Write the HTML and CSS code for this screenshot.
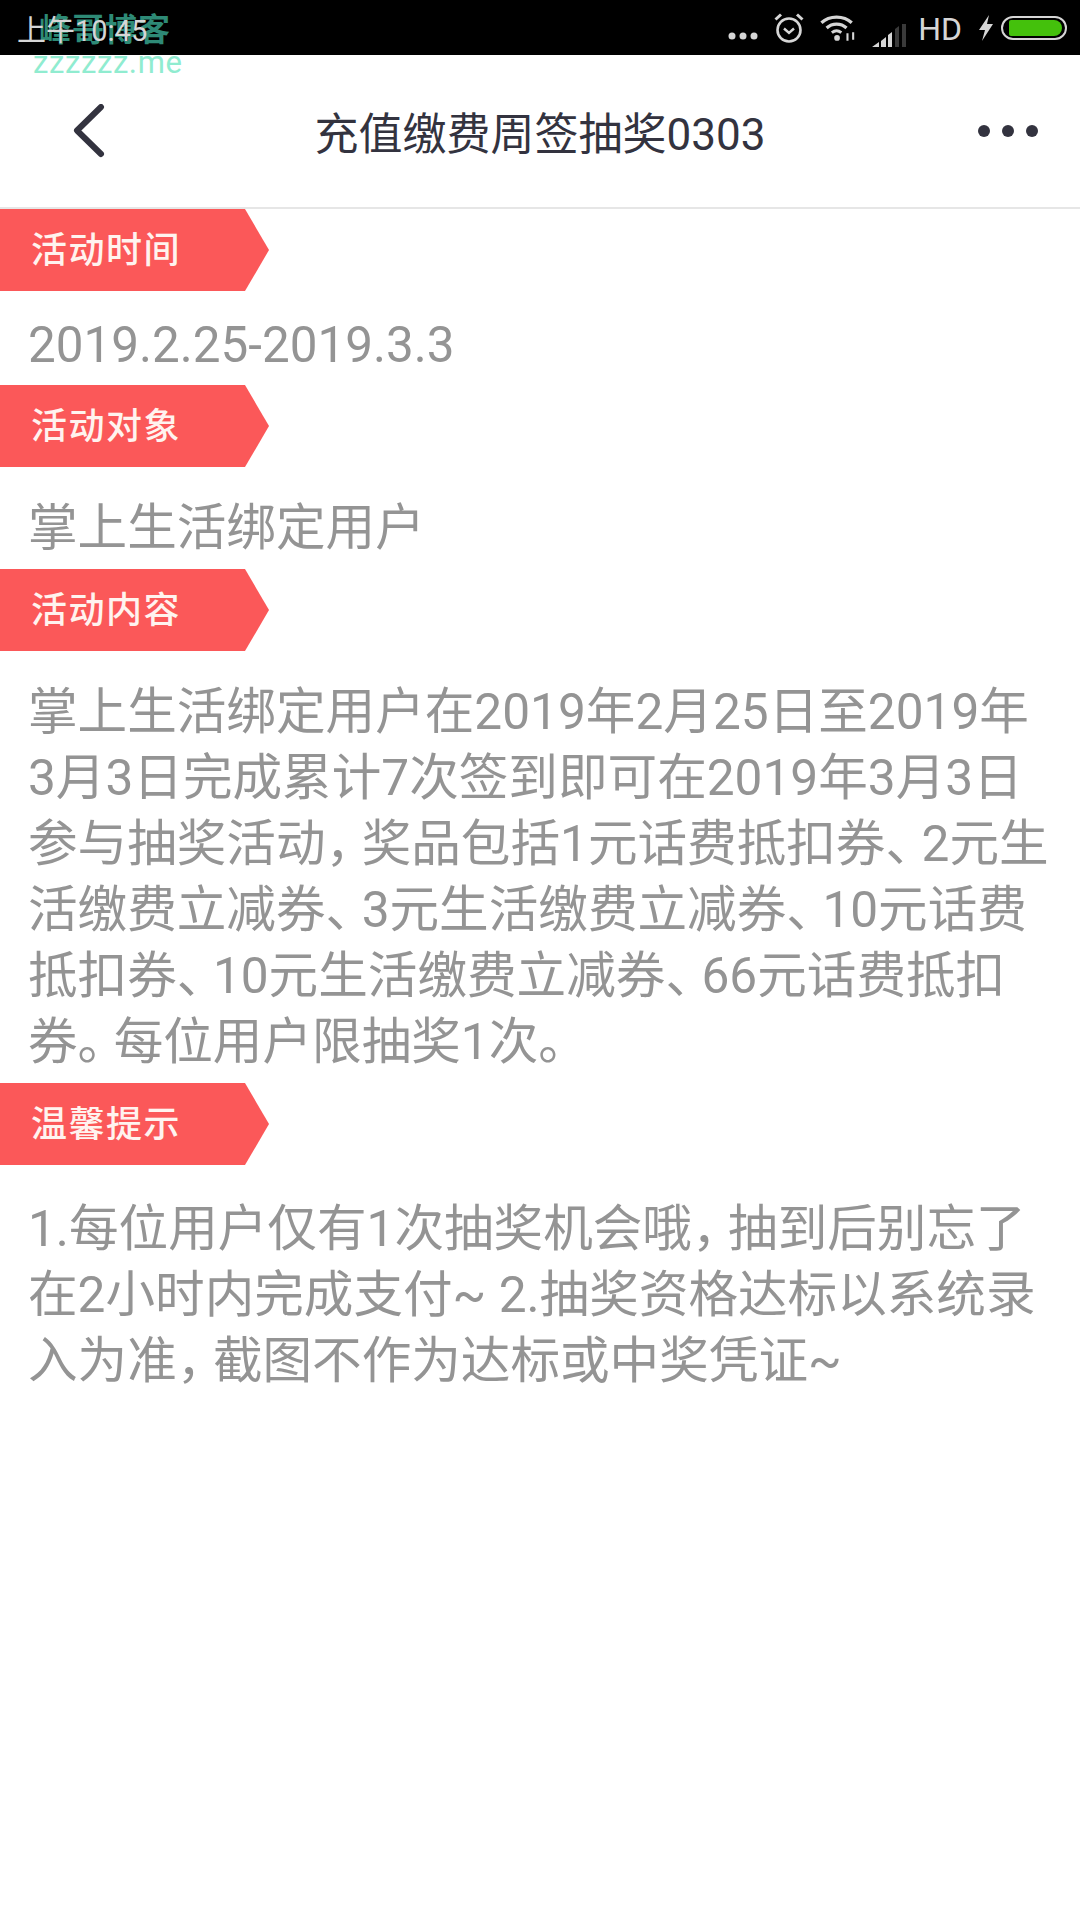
FILE: index.html
```html
<!DOCTYPE html>
<html lang="zh-CN">
<head>
    <meta charset="UTF-8">
    <meta name="viewport" content="width=device-width, initial-scale=1.0">
    <title>充值缴费周签抽奖0303</title>
    <link rel="stylesheet" href="styles.css">
</head>
<body>
    <div class="watermark">
        <div class="watermark-title">峰哥博客</div>
        <div class="watermark-url">zzzzzz.me</div>
    </div>

    <div class="status-bar">
        <span class="status-time">上午10:45</span>
        <div class="status-icons">
            <svg class="icon-dots" width="30" height="10" viewBox="0 0 30 10"><circle cx="4" cy="5" r="3.5"/><circle cx="15" cy="5" r="3.5"/><circle cx="26" cy="5" r="3.5"/></svg>
            <svg class="icon-alarm" width="32" height="32" viewBox="0 0 32 32" fill="none">
                <circle cx="16" cy="18" r="11.5" stroke-width="2.6"/>
                <path d="M11 16.500l5 4.500 5-4.500" stroke-width="2.400"/>
                <path d="M2.500 7.500L8 2.500M29.500 7.500L24 2.500" stroke-width="3"/>
            </svg>
            <svg class="icon-wifi" width="36" height="27" viewBox="0 0 38 28" fill="none">
                <path d="M1.500 9C10 1 25 1 33.500 9" stroke-width="3.400"/>
                <path d="M7 14.500C13 9 22 9 28 14.500" stroke-width="3.400"/>
                <path d="M12.500 19.500C15.500 17 19.500 17 22.500 19.500" stroke-width="3"/>
                <circle class="fill" cx="18" cy="25" r="3"/>
                <path d="M29 20v8M35 19v8" stroke-width="2.200"/>
            </svg>
            <svg class="icon-signal" width="36" height="24" viewBox="0 0 36 24">
                <path class="fill" d="M1 24L8 19V24zM10 18L15 14V24H10zM17 12L21 9V24H17z"/>
                <path class="dim" d="M24 6L28 3V24H24zM31 1H35V24H31z"/>
            </svg>
            <span class="status-hd">HD</span>
            <svg class="icon-bolt" width="16" height="26" viewBox="0 0 16 26"><path class="fill" d="M11 0L1 15H7L4 26L15 9H9z"/></svg>
            <div class="battery"><div class="battery-level"></div></div>
        </div>
    </div>

    <header class="nav-bar">
        <svg class="nav-back" width="34" height="54" viewBox="0 0 34 54" fill="none"><path d="M29 3L5 26.500 29 50"/></svg>
        <h1 class="nav-title">充值缴费周签抽奖0303</h1>
        <div class="nav-more"><span></span><span></span><span></span></div>
    </header>

    <main>
        <div class="tag">活动时间</div>
        <p class="content content-date">2019.2.25-2019.3.3</p>

        <div class="tag">活动对象</div>
        <p class="content">掌上生活绑定用户</p>

        <div class="tag">活动内容</div>
        <p class="content">掌上生活绑定用户在2019年2月25日至2019年<br>3月3日完成累计7次签到即可在2019年3月3日<br>参与抽奖活动<span class="punct">，</span>奖品包括1元话费抵扣券<span class="punct">、</span>2元生<br>活缴费立减券<span class="punct">、</span>3元生活缴费立减券<span class="punct">、</span>10元话费<br>抵扣券<span class="punct">、</span>10元生活缴费立减券<span class="punct">、</span>66元话费抵扣<br>券<span class="punct">。</span>每位用户限抽奖1次<span class="punct">。</span></p>

        <div class="tag">温馨提示</div>
        <p class="content content-tips">1.每位用户仅有1次抽奖机会哦<span class="punct">，</span>抽到后别忘了<br>在2小时内完成支付~ 2.抽奖资格达标以系统录<br>入为准<span class="punct">，</span>截图不作为达标或中奖凭证~</p>
    </main>
</body>
</html>
```

FILE: styles.css
```css
:root {
    --tag-color: #fb5859;
    --text-gray: #949494;
    --nav-dark: #33333f;
    --bar-icon: #d6d6d6;
}

html, body {
    margin: 0;
    padding: 0;
}

body {
    position: relative;
    width: 1080px;
    min-height: 1920px;
    background: #fff;
    font-family: Roboto, "Noto Sans CJK SC", sans-serif;
    overflow: hidden;
}

/* Status bar */
.status-bar {
    height: 55px;
    background: #000;
    color: var(--bar-icon);
    display: flex;
    align-items: center;
    justify-content: space-between;
    padding: 0 13px 0 17px;
    box-sizing: border-box;
}

.status-time {
    position: relative;
    z-index: 2;
    font-size: 29px;
}

.status-icons {
    display: flex;
    align-items: center;
}

.status-icons svg {
    stroke: var(--bar-icon);
    fill: none;
}

.status-icons svg .fill {
    fill: var(--bar-icon);
    stroke: none;
}

.status-icons svg .dim {
    fill: #3a3a3a;
    stroke: none;
}

.icon-dots {
    margin: 17px 15px 0 0;
}

.status-icons .icon-dots {
    fill: var(--bar-icon);
    stroke: none;
}

.icon-alarm {
    margin: 0 15px 0 0;
}

.icon-wifi {
    margin-right: 15px;
}

.icon-signal {
    margin: 14px 11px 0 0;
}

.status-hd {
    font-size: 32px;
    margin: 3px 16px 0 0;
}

.icon-bolt {
    margin-right: 7px;
}

.battery {
    width: 66px;
    height: 24px;
    border: 2px solid var(--bar-icon);
    border-radius: 12px;
    box-sizing: border-box;
    padding: 2px 3px 2px 6px;
}

.battery-level {
    height: 100%;
    background: #44c10c;
    border-radius: 2px 8px 8px 2px;
}

/* Watermark over the corner, sits above the bar, time goes on top */
.watermark {
    position: absolute;
    z-index: 1;
    top: 12px;
    left: 33px;
}

.watermark-title {
    font-size: 32px;
    line-height: 36px;
    font-weight: 700;
    letter-spacing: 1px;
    color: #2e8a76;
    margin-left: 6px;
}

.watermark-url {
    font-size: 31px;
    line-height: 28px;
    letter-spacing: 0.6px;
    color: #90ecd0;
    margin-top: 1px;
}

/* Nav */
.nav-bar {
    height: 154px;
    box-sizing: border-box;
    border-bottom: 2px solid #e6e6e6;
    display: grid;
    grid-template-columns: 1fr auto 1fr;
    align-items: center;
    padding: 0 42px 0 72px;
}

.nav-back path {
    stroke: var(--nav-dark);
    stroke-width: 6;
    stroke-linecap: round;
    stroke-linejoin: round;
}

.nav-title {
    margin: 0 0 0 -30px;
    font-size: 44px;
    font-weight: 400;
    color: var(--nav-dark);
}

.nav-more {
    display: flex;
    justify-content: flex-end;
    gap: 12px;
}

.nav-more span {
    width: 12px;
    height: 12px;
    border-radius: 50%;
    background: var(--nav-dark);
}

/* Content */
.tag {
    width: 269px;
    height: 82px;
    box-sizing: border-box;
    padding-left: 31px;
    background: var(--tag-color);
    clip-path: polygon(0 0, 245px 0, 100% 50%, 245px 100%, 0 100%);
    color: #fff3ef;
    font-size: 36px;
    font-weight: 500;
    line-height: 84px;
    letter-spacing: 1.5px;
}

.content {
    margin: 0;
    padding: 28px 0 8px 28px;
    font-size: 49.6px;
    line-height: 66px;
    white-space: nowrap;
    color: var(--text-gray);
}

.punct {
    letter-spacing: -13.5px;
}

.content-date {
    padding: 21px 0 7px 28px;
    font-size: 49.4px;
}

.content-tips {
    padding-top: 31px;
}
```
